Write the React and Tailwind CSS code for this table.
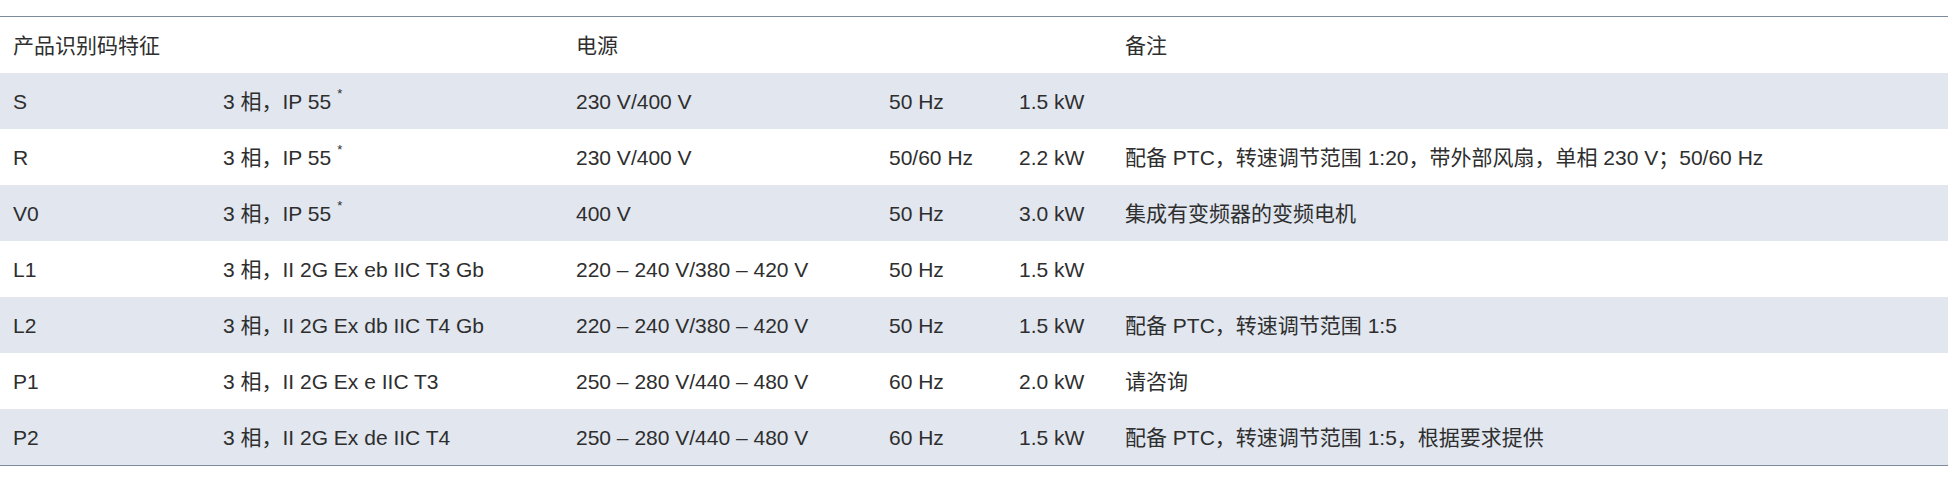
import React from 'react'

const rows = [
  { code: 'S', type: '3 相，IP 55', star: true, volt: '230 V/400 V', hz: '50 Hz', kw: '1.5 kW', note: '' },
  { code: 'R', type: '3 相，IP 55', star: true, volt: '230 V/400 V', hz: '50/60 Hz', kw: '2.2 kW', note: '配备 PTC，转速调节范围 1:20，带外部风扇，单相 230 V；50/60 Hz' },
  { code: 'V0', type: '3 相，IP 55', star: true, volt: '400 V', hz: '50 Hz', kw: '3.0 kW', note: '集成有变频器的变频电机' },
  { code: 'L1', type: '3 相，II 2G Ex eb IIC T3 Gb', volt: '220 – 240 V/380 – 420 V', hz: '50 Hz', kw: '1.5 kW', note: '' },
  { code: 'L2', type: '3 相，II 2G Ex db IIC T4 Gb', volt: '220 – 240 V/380 – 420 V', hz: '50 Hz', kw: '1.5 kW', note: '配备 PTC，转速调节范围 1:5' },
  { code: 'P1', type: '3 相，II 2G Ex e IIC T3', volt: '250 – 280 V/440 – 480 V', hz: '60 Hz', kw: '2.0 kW', note: '请咨询' },
  { code: 'P2', type: '3 相，II 2G Ex de IIC T4', volt: '250 – 280 V/440 – 480 V', hz: '60 Hz', kw: '1.5 kW', note: '配备 PTC，转速调节范围 1:5，根据要求提供' },
]

const grid = 'grid grid-cols-[210px_353px_313px_130px_106px_1fr] items-center h-[56px] pl-[13px]'

export default function App() {
  return (
    <div className="w-[1957px] h-[485px] bg-white pt-[16px] pr-[9px] font-['Liberation_Sans','Noto_Sans_CJK_SC',sans-serif] text-[21px] text-[#2e2e2e] leading-none">
      <div className="border-t border-b border-[#7d8b9c]">
        <div className={grid}>
          <div className="col-span-2">产品识别码特征</div>
          <div className="col-span-3">电源</div>
          <div>备注</div>
        </div>
        {rows.map((r, i) => (
          <div key={r.code} className={`${grid} ${i % 2 === 0 ? 'bg-[#e1e6ef]' : 'bg-white'}`}>
            <div>{r.code}</div>
            <div className="whitespace-nowrap flex items-start">
              <span>{r.type}</span>
              {r.star && <span className="text-[13px] ml-[6px] relative top-[-4px]">*</span>}
            </div>
            <div className="whitespace-nowrap">{r.volt}</div>
            <div className="whitespace-nowrap">{r.hz}</div>
            <div className="whitespace-nowrap">{r.kw}</div>
            <div className="whitespace-nowrap">{r.note}</div>
          </div>
        ))}
      </div>
    </div>
  )
}
